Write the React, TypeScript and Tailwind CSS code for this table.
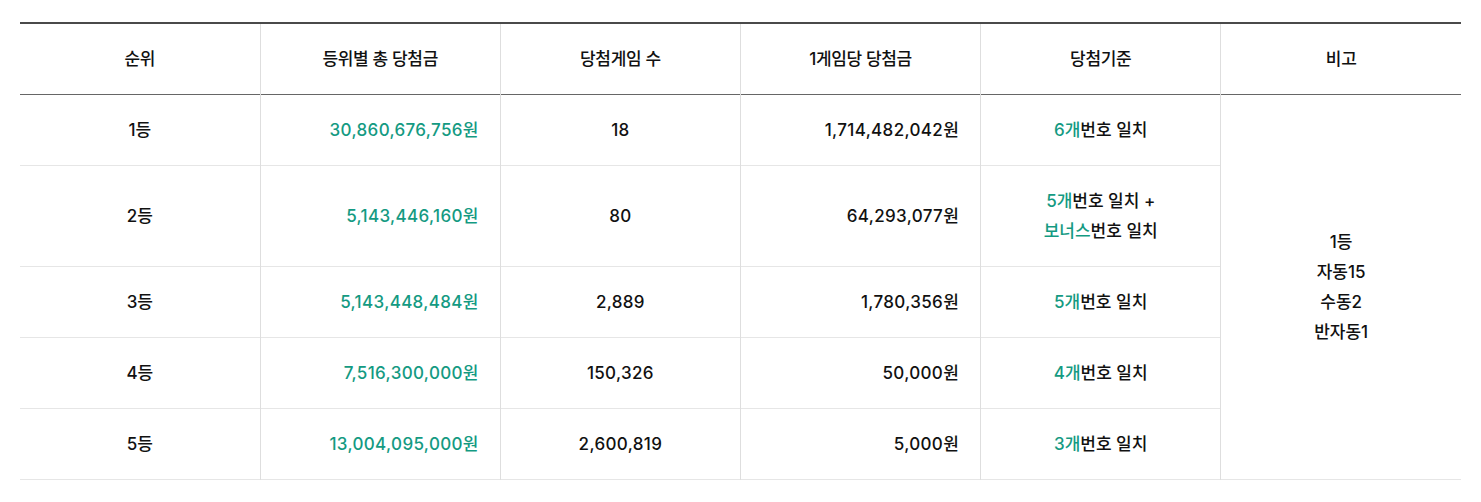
import React from 'react';

type Row = {
  rank: string;
  total: string;
  count: string;
  each: string;
  rule: React.ReactNode;
};

const G = ({ children }: { children: React.ReactNode }) => (
  <span className="text-[#149a82]">{children}</span>
);

const rows: Row[] = [
  { rank: '1등', total: '30,860,676,756원', count: '18', each: '1,714,482,042원', rule: <><G>6개</G>번호 일치</> },
  {
    rank: '2등',
    total: '5,143,446,160원',
    count: '80',
    each: '64,293,077원',
    rule: (
      <>
        <G>5개</G>번호 일치 +<br />
        <G>보너스</G>번호 일치
      </>
    ),
  },
  { rank: '3등', total: '5,143,448,484원', count: '2,889', each: '1,780,356원', rule: <><G>5개</G>번호 일치</> },
  { rank: '4등', total: '7,516,300,000원', count: '150,326', each: '50,000원', rule: <><G>4개</G>번호 일치</> },
  { rank: '5등', total: '13,004,095,000원', count: '2,600,819', each: '5,000원', rule: <><G>3개</G>번호 일치</> },
];

const headers = ['순위', '등위별 총 당첨금', '당첨게임 수', '1게임당 당첨금', '당첨기준', '비고'];

const cell = 'border-l border-[#dedede] first:border-l-0 py-5 leading-[30px]';
const num = 'tracking-[0.02em]';

export default function App() {
  return (
    <div
      className="bg-white px-5 pt-[22px] pb-[22px] text-[#111] text-[17px] font-medium"
      style={{ fontFamily: 'Inter, "Noto Sans CJK KR", sans-serif' }}
    >
      <table className="w-full table-fixed border-collapse border-t-2 border-[#4a4a4a]">
        <thead>
          <tr className="border-b border-[#666]">
            {headers.map((h) => (
              <th key={h} className={`${cell} text-center font-medium tracking-[-0.02em]`}>
                {h}
              </th>
            ))}
          </tr>
        </thead>
        <tbody>
          {rows.map((r, i) => (
            <tr key={r.rank} className="border-b border-[#e6e6e6]">
              <td className={`${cell} text-center`}>{r.rank}</td>
              <td className={`${cell} ${num} text-right pr-[21px] text-[#149a82]`}>{r.total}</td>
              <td className={`${cell} ${num} text-center`}>{r.count}</td>
              <td className={`${cell} ${num} text-right pr-[21px]`}>{r.each}</td>
              <td className={`${cell} text-center`}>{r.rule}</td>
              {i === 0 && (
                <td rowSpan={5} className={`${cell} text-center align-middle`}>
                  1등<br />
                  자동15<br />
                  수동2<br />
                  반자동1
                </td>
              )}
            </tr>
          ))}
        </tbody>
      </table>
    </div>
  );
}
